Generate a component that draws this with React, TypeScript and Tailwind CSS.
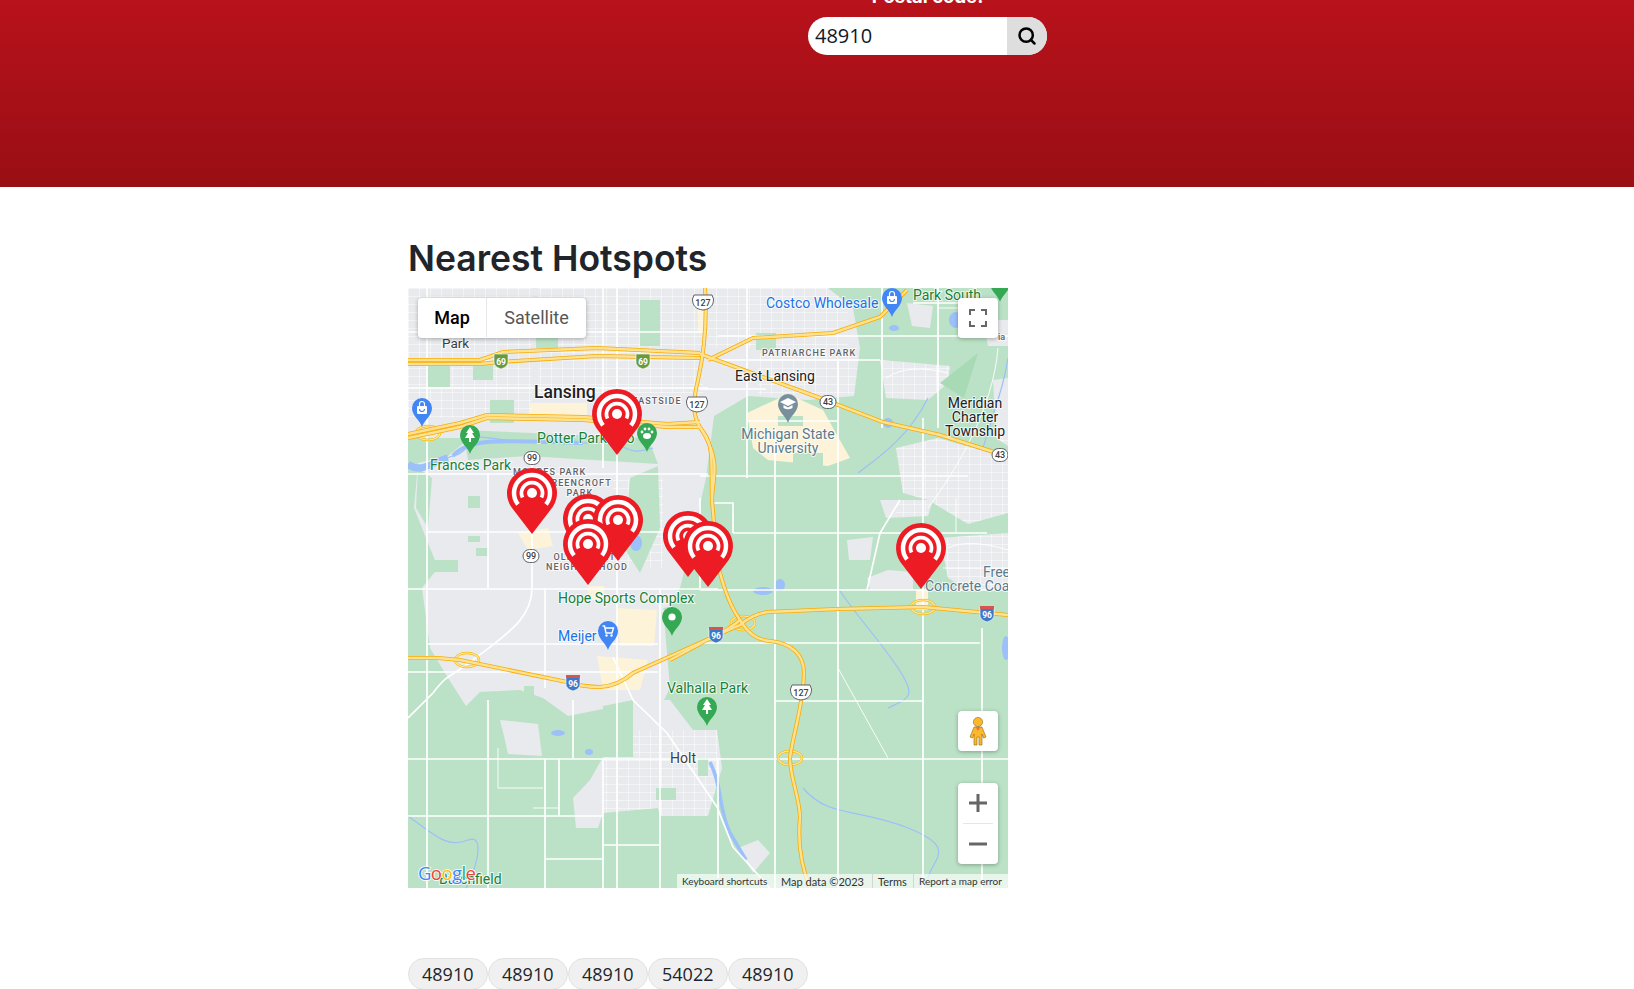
import { Search } from 'lucide-react';

const GRAY = '#e8eaed';
const GREEN = '#bbe2c6';
const PARK = '#a8dab5';
const BEIGE = '#fcf3d9';
const WATER = '#9cc0f9';

const grayAreas = [
  'M0 0H420L445 20L452 60L446 108L400 112L340 108L306 128L298 190L288 235L272 300L256 330L262 400L246 432L200 420L160 428L135 410L112 402L72 404L58 418L40 390L22 360L14 300L30 280L18 250L6 220L10 175L40 168L62 150L0 150Z',
  'M92 432L130 436L134 468L100 466L96 448Z',
  'M225 412L262 412L285 442H309L314 480L300 528H252L250 520L195 525L190 540L168 540L165 510L182 492L195 469H225Z',
  'M439 252L465 249L462 272L441 272Z',
  'M459 290L480 282L505 284L505 302H462Z',
  'M532 250L600 245V302H560L540 290Z',
  'M472 212L525 212L520 228L478 230Z',
  'M488 160L530 150L600 170V225L560 236L520 212L495 205Z',
  'M472 72L509 75L542 78L540 95L520 112L478 110Z',
  'M499 15L525 18L522 40L504 38Z',
  'M575 32H600V58H580Z',
  'M585 92L600 90V158L588 150Z',
  'M330 560L350 552L362 565L345 585Z',
];

const parks = [
  'M20 75H42V99H20Z', 'M65 75H85V92H65Z', 'M232 12H252V58H232Z', 'M128 48L150 46V60H128Z',
  'M348 45H368V62H348Z', 'M82 112H106V135H82Z', 'M55 142L240 150L250 176L120 168L60 172Z',
  'M222 190L250 178L252 240L232 285L216 260Z', 'M385 165H415V185H385Z', 'M370 128H395V138H370Z', 'M60 248H72V254H60Z',
  'M25 272H50V284H25Z', 'M60 208H72V220H60Z', 'M68 260H80V268H68Z', 'M255 320L280 315L290 345L272 360Z',
  'M10 180L24 190L20 240L8 220Z', 'M248 500H268V512H248Z', 'M290 470H300V488H290Z', 'M532 95L570 65L556 110Z',
  'M195 418L225 412V468H195Z', 'M280 412L309 412L312 440H290Z', 'M116 398H126V408H116Z',
];

const beige = [
  'M339 125L380 106L415 122L442 170L420 178L360 172L345 160Z',
  'M122 115H179V128H122Z',
  'M209 320L249 322L246 358H212Z',
  'M189 368L240 372L232 402L195 402Z',
  'M110 245L140 240L145 258L120 262Z',
  'M290 20H298V45H290Z',
  'M180 298H196V312H180Z',
  'M508 302H520V322H508Z',
];

const whiteRoads = [
  'M0 186H300', 'M20 244H310', 'M0 301H310', 'M20 356H250', 'M0 384H250', 'M0 471H600', 'M0 528H195', 'M138 571H195', 'M195 557H252',
  'M325 245H579', 'M292 302H600', 'M292 355H572', 'M367 413H515', 'M0 100H300', 'M0 44H300', 'M300 72H472', 'M310 48H600', 'M505 15H570', 'M292 101H358', 'M340 133H430', 'M292 188H560',
  'M19 0V600', 'M80 186V300', 'M124 172V300C124 330 100 345 69 369S40 385 25 405L0 430', 'M209 0V600', 'M137 300V400', 'M137 471V600', 'M252 300V600', 'M165 412V470',
  'M151 471V528', 'M80 412V600', 'M195 471V600', 'M367 140V600', 'M339 0V190', 'M430 72V600', 'M515 130V600', 'M574 340V600', 'M310 470V590',
  'M474 0V140', 'M530 0V140', 'M305 215H325V245', 'M195 0V180', 'M292 210V300',
  'M492 212L472 245L459 302', 'M205 369L225 412L259 445L309 519L325 559L362 600',
];

const thinRoads = [
  'M590 60C585 120 550 180 520 220', 'M90 460V500H135', 'M125 520H150',
  'M430 380L480 470', 'M548 245V210', 'M530 20H590', 'M478 90Q500 75 540 85', 'M540 260Q560 250 600 262M535 280H600',
];

const water = [
  'M0 180C16 190 28 172 45 168S60 150 69 149 120 158 175 155 210 170 245 160',
  'M395 500C420 530 450 520 500 540S525 570 520 590',
  'M0 528C30 550 40 560 60 552S65 590 58 600',
  'M520 110C500 150 470 170 450 185',
  'M430 300C450 330 470 350 490 380S500 410 480 420',
  'M575 160C590 110 595 100 600 70',
];

const lakes = [
  { cx: 150, cy: 445, rx: 7, ry: 3 }, { cx: 181, cy: 464, rx: 4, ry: 3 }, { cx: 355, cy: 303, rx: 10, ry: 4 }, { cx: 372, cy: 297, rx: 5, ry: 6 },
  { cx: 486, cy: 40, rx: 5, ry: 3 }, { cx: 548, cy: 32, rx: 7, ry: 8 }, { cx: 598, cy: 360, rx: 4, ry: 12 },
  { cx: 228, cy: 255, rx: 6, ry: 8 }, { cx: 480, cy: 135, rx: 5, ry: 5 },
];

const highways = [
  'M0 370H30L52 372L159 394Q175 399 192 399Q210 398 225 385L305 349L332 337Q345 326 360 324L430 321L515 319L579 325L600 327',
  'M297 0C299 30 296 65 290 92C285 112 283 130 296 145C306 158 303 180 304 212L309 272C315 300 322 318 332 332C340 345 348 352 362 353C385 355 396 368 396 385C395 420 385 445 382 470C382 490 392 510 392 530C390 550 392 575 402 600',
  'M0 72H72L95 64L189 60L292 65',
  'M0 76H72L90 74L189 68L292 70',
  'M300 72L345 50L425 45L472 29L499 2',
  'M292 66L412 110L475 134L532 147L589 165L600 168',
  'M0 150L52 139L79 130L175 132L259 139L292 139',
  'M0 146L52 135L79 127L175 129L259 136L292 134',
  'M292 139C315 175 304 190 304 212',
  'M332 332C318 345 300 350 292 356L262 372',
];

const ramps = [[20, 145], [515, 319], [59, 372], [382, 470], [335, 335]];

const pins = [
  [209, 167], [124, 246], [180, 272], [210, 273], [180, 297], [280, 289], [300, 299], [513, 301],
];

const labels: { t: string; x: number; y: number; fill: string; size?: number; w?: number; anchor?: 'middle'; track?: number }[] = [
  { t: 'Park', x: 34, y: 60, fill: '#3c4043' },
  { t: 'Lansing', x: 126, y: 110, fill: '#202124', size: 17.5, w: 500 },
  { t: 'EASTSIDE', x: 224, y: 116, fill: '#5f6368', size: 9, w: 500, track: 1.1 },
  { t: 'Potter Park Zoo', x: 129, y: 155, fill: '#188038', size: 14 },
  { t: 'Frances Park', x: 22, y: 182, fill: '#188038', size: 14 },
  { t: 'MOORES PARK', x: 105, y: 187, fill: '#5f6368', size: 9, w: 500, track: 1.1 },
  { t: 'GREENCROFT', x: 170, y: 198, fill: '#5f6368', size: 9, w: 500, anchor: 'middle', track: 1.1 },
  { t: 'PARK', x: 172, y: 208, fill: '#5f6368', size: 9, w: 500, anchor: 'middle', track: 1.1 },
  { t: 'OLD EVERETT', x: 180, y: 272, fill: '#5f6368', size: 9, w: 500, anchor: 'middle', track: 1.1 },
  { t: 'NEIGHBORHOOD', x: 179, y: 282, fill: '#5f6368', size: 9, w: 500, anchor: 'middle', track: 1.1 },
  { t: 'Hope Sports Complex', x: 150, y: 315, fill: '#188038', size: 14 },
  { t: 'Meijer', x: 150, y: 353, fill: '#1a73e8', size: 14 },
  { t: 'Valhalla Park', x: 259, y: 405, fill: '#188038', size: 14 },
  { t: 'Holt', x: 262, y: 475, fill: '#3c4043', size: 14 },
  { t: 'Costco Wholesale', x: 358, y: 20, fill: '#1a73e8', size: 14 },
  { t: 'Park South', x: 505, y: 12, fill: '#188038', size: 14 },
  { t: 'PATRIARCHE PARK', x: 354, y: 68, fill: '#5f6368', size: 9, w: 500, track: 1.1 },
  { t: 'East Lansing', x: 327, y: 93, fill: '#202124', size: 14 },
  { t: 'Michigan State', x: 380, y: 151, fill: '#5b7b8b', size: 14, anchor: 'middle' },
  { t: 'University', x: 380, y: 165, fill: '#5b7b8b', size: 14, anchor: 'middle' },
  { t: 'Meridian', x: 567, y: 120, fill: '#202124', size: 14, anchor: 'middle' },
  { t: 'Charter', x: 567, y: 134, fill: '#202124', size: 14, anchor: 'middle' },
  { t: 'Township', x: 567, y: 148, fill: '#202124', size: 14, anchor: 'middle' },
  { t: 'Free', x: 575, y: 289, fill: '#5b7b8b', size: 14 },
  { t: 'Concrete Coating', x: 517, y: 303, fill: '#5b7b8b', size: 14 },
  { t: 'Burchfield', x: 31, y: 596, fill: '#188038', size: 14 },
  { t: 'ia', x: 590, y: 52, fill: '#5f6368', size: 9, w: 500 },
];

function MapLabel({ t, x, y, fill, size = 13.5, w = 400, anchor, track }: (typeof labels)[number]) {
  return (
    <text
      x={x}
      y={y}
      fill={fill}
      fontSize={size}
      fontWeight={w}
      textAnchor={anchor}
      letterSpacing={track}
      stroke="#ffffff"
      strokeWidth={2}
      strokeOpacity={0.75}
      className="[paint-order:stroke]"
    >
      {t}
    </text>
  );
}

function Hotspot({ x, y }: { x: number; y: number }) {
  return (
    <g transform={`translate(${x} ${y})`}>
      <path d="M0 0L-20.7 -27A25 25 0 1 1 20.7 -27Z" fill="#ed1c24" />
      <path d="M-14 -29.7A18 18 0 1 1 14 -29.7" fill="none" stroke="#fff" strokeWidth={4.5} />
      <path d="M-9.5 -36.5A10.5 10.5 0 1 1 9.5 -36.5" fill="none" stroke="#fff" strokeWidth={3.8} />
      <circle cx={0} cy={-41} r={5} fill="#fff" />
    </g>
  );
}

function Poi({ x, y, fill, children }: { x: number; y: number; fill: string; children?: React.ReactNode }) {
  return (
    <g transform={`translate(${x} ${y})`}>
      <path d="M0 0C-2 -7 -10 -11 -10 -19A10 10 0 1 1 10 -19C10 -11 2 -7 0 0Z" fill={fill} />
      {children}
    </g>
  );
}

const tree = <path d="M0 -27L-4 -21H-2L-5 -16H-1V-12H1V-16H5L2 -21H4Z" fill="#fff" />;
const bag = (
  <g fill="none" stroke="#fff" strokeWidth={1.2}>
    <rect x={-5} y={-21} width={10} height={8} rx={1} fill="#fff" stroke="none" />
    <path d="M-2.5 -21V-23A2.5 2.5 0 0 1 2.5 -23V-21" />
    <path d="M-2.5 -18A2.5 2.5 0 0 0 2.5 -18" stroke="#4285f4" />
  </g>
);

function UsShield({ x, y, n }: { x: number; y: number; n: string }) {
  return (
    <g transform={`translate(${x} ${y})`}>
      <path d="M-9 -7H9L10.5 -3C10.5 3 8 7 0 8C-8 7 -10.5 3 -10.5 -3Z" fill="#fff" stroke="#5f6368" />
      <text y={3.5} textAnchor="middle" fontSize={9} fontWeight={500} fill="#3c4043">{n}</text>
    </g>
  );
}

function RoundShield({ x, y, n, w = 10 }: { x: number; y: number; n: string; w?: number }) {
  return (
    <g transform={`translate(${x} ${y})`}>
      <rect x={-w} y={-6.5} width={w * 2} height={13} rx={6.5} fill="#fff" stroke="#5f6368" />
      <text y={3.2} textAnchor="middle" fontSize={9} fontWeight={500} fill="#3c4043">{n}</text>
    </g>
  );
}

function IShield({ x, y, n, fill = '#3d78c9' }: { x: number; y: number; n: string; fill?: string }) {
  return (
    <g transform={`translate(${x} ${y})`}>
      <path d="M-7 -7H7V1C7 5 3 7 0 8C-3 7 -7 5 -7 1Z" fill={fill} stroke="#fff" strokeWidth={0.6} />
      {fill === '#3d78c9' && <rect x={-7} y={-8} width={14} height={3} fill="#d9534f" />}
      <text y={3.5} textAnchor="middle" fontSize={8.5} fontWeight={700} fill="#fff">{n}</text>
    </g>
  );
}

function StreetMap() {
  return (
    <svg viewBox="0 0 600 600" className="block w-full h-full font-['Roboto',sans-serif]">
      <defs>
        <pattern id="streets" width="11" height="8" patternUnits="userSpaceOnUse">
          <path d="M0 .5H11M.5 0V8" stroke="#fff" strokeWidth={0.7} strokeOpacity={0.7} fill="none" />
        </pattern>
        <clipPath id="urban">
          {grayAreas.map((d) => <path key={d} d={d} />)}
        </clipPath>
      </defs>
      <rect width={600} height={600} fill={GREEN} />
      {grayAreas.map((d) => <path key={d} d={d} fill={GRAY} />)}
      {beige.map((d) => <path key={d} d={d} fill={BEIGE} />)}

      <g clipPath="url(#urban)">
        <rect x={0} y={0} width={124} height={130} fill="url(#streets)" />
        <rect x={130} y={0} width={165} height={105} fill="url(#streets)" />
        <rect x={300} y={0} width={140} height={60} fill="url(#streets)" />
        <rect x={350} y={65} width={100} height={42} fill="url(#streets)" />
        <rect x={205} y={190} width={50} height={90} fill="url(#streets)" />
        <rect x={195} y={442} width={115} height={90} fill="url(#streets)" />
        <rect x={488} y={150} width={112} height={85} fill="url(#streets)" />
        <rect x={535} y={245} width={65} height={60} fill="url(#streets)" />
        <rect x={472} y={72} width={70} height={40} fill="url(#streets)" />
      </g>
      {parks.map((d) => <path key={d} d={d} fill={d.startsWith('M532') ? PARK : GREEN} />)}

      <g fill="none" stroke={WATER} strokeWidth={1.2}>
        {water.map((d) => <path key={d} d={d} />)}
      </g>
      <path d="M45 168C60 150 90 152 175 155" fill="none" stroke={WATER} strokeWidth={4} />
      <path d="M0 176C14 186 24 174 40 170" fill="none" stroke={WATER} strokeWidth={7} />
      <path d="M302 474C315 500 310 520 322 545L338 572" fill="none" stroke={WATER} strokeWidth={3.5} />
      {lakes.map((l) => <ellipse key={`${l.cx}-${l.cy}`} {...l} fill={WATER} />)}

      <g fill="none" stroke="#fff" strokeWidth={1.7}>
        {whiteRoads.map((d) => <path key={d} d={d} />)}
      </g>
      <g fill="none" stroke="#fff" strokeWidth={0.9}>
        {thinRoads.map((d) => <path key={d} d={d} />)}
      </g>

      <g fill="none">
        {ramps.map(([x, y]) => <ellipse key={x} cx={x} cy={y} rx={12} ry={7} stroke="#fbbc04" strokeWidth={2.4} />)}
        {ramps.map(([x, y]) => <ellipse key={x} cx={x} cy={y} rx={12} ry={7} stroke="#fde8a8" strokeWidth={1.1} />)}
        {highways.map((d) => <path key={d} d={d} stroke="#f9ab00" strokeWidth={4} />)}
        {highways.map((d) => <path key={d} d={d} stroke="#fde293" strokeWidth={2.4} />)}
      </g>

      {labels.map((l) => <MapLabel key={l.t} {...l} />)}

      <IShield x={93} y={73} n="69" fill="#6a9a3e" />
      <IShield x={235} y={73} n="69" fill="#6a9a3e" />
      <UsShield x={295} y={14} n="127" />
      <UsShield x={289} y={116} n="127" />
      <UsShield x={393} y={404} n="127" />
      <RoundShield x={420} y={114} n="43" w={8} />
      <RoundShield x={592} y={167} n="43" w={8} />
      <RoundShield x={124} y={170} n="99" w={8} />
      <RoundShield x={123} y={268} n="99" w={8} />
      <IShield x={308} y={347} n="96" />
      <IShield x={165} y={395} n="96" />
      <IShield x={579} y={326} n="96" />

      <Poi x={14} y={139} fill="#4285f4">{bag}</Poi>
      <Poi x={484} y={29} fill="#4285f4">{bag}</Poi>
      <Poi x={592} y={14} fill="#34a853" />
      <Poi x={62} y={166} fill="#34a853">{tree}</Poi>
      <Poi x={299} y={438} fill="#34a853">{tree}</Poi>
      <Poi x={239} y={164} fill="#34a853">
        <g fill="#fff">
          <ellipse cx={0} cy={-16} rx={4} ry={3} />
          <circle cx={-5} cy={-20} r={1.4} />
          <circle cx={-2} cy={-23} r={1.4} />
          <circle cx={2} cy={-23} r={1.4} />
          <circle cx={5} cy={-20} r={1.4} />
        </g>
      </Poi>
      <Poi x={380} y={135} fill="#78909c">
        <path d="M0 -25L8 -21L0 -17L-8 -21Z" fill="#fff" />
        <path d="M-4.5 -18V-15Q0 -12.5 4.5 -15V-18L0 -15.5Z" fill="#fff" />
      </Poi>
      <Poi x={200} y={362} fill="#4285f4">
        <path d="M-5.5 -24H-3.5L-2 -17H4L5.5 -22H-3" fill="none" stroke="#fff" strokeWidth={1.4} />
        <circle cx={-1.5} cy={-14.5} r={1.2} fill="#fff" />
        <circle cx={3.5} cy={-14.5} r={1.2} fill="#fff" />
      </Poi>
      <Poi x={264} y={348} fill="#34a853">
        <circle cx={0} cy={-19} r={3.6} fill="#fff" />
      </Poi>

      {pins.map(([x, y]) => <Hotspot key={`${x}-${y}`} x={x} y={y} />)}

      <text x={10} y={592} fontSize={18.5} fontWeight={500} stroke="#fff" strokeWidth={1.6} className="[paint-order:stroke] font-['Open_Sans',sans-serif]" letterSpacing={-0.6}>
        <tspan fill="#4285f4">G</tspan>
        <tspan fill="#ea4335">o</tspan>
        <tspan fill="#fbbc04">o</tspan>
        <tspan fill="#4285f4">g</tspan>
        <tspan fill="#34a853">l</tspan>
        <tspan fill="#ea4335">e</tspan>
      </text>
    </svg>
  );
}

function MapOverlay() {
  return (
    <>
      <div className="absolute left-[10px] top-[10px] flex h-10 rounded-sm bg-white pb-px text-[18px] font-['Roboto',sans-serif] shadow-[0_1px_4px_rgba(0,0,0,0.3)]">
        <div className="flex w-[69px] items-center justify-center font-medium text-black border-r border-gray-200">Map</div>
        <div className="flex w-[99px] items-center justify-center text-[#565656]">Satellite</div>
      </div>

      <div className="absolute right-[10px] top-[10px] flex h-10 w-10 items-center justify-center rounded-sm bg-white shadow-[0_1px_4px_rgba(0,0,0,0.3)]">
        <svg viewBox="0 0 18 18" className="h-[18px] w-[18px]" fill="none" stroke="#666666" strokeWidth={2}>
          <path d="M1 6V1H6M12 1H17V6M17 12V17H12M6 17H1V12" />
        </svg>
      </div>

      <div className="absolute right-[10px] top-[423px] flex h-10 w-10 items-center justify-center rounded-sm bg-white shadow-[0_1px_4px_rgba(0,0,0,0.3)]">
        <svg viewBox="0 0 18 30" className="h-[30px] w-[18px]">
          <circle cx={9} cy={6} r={4.6} fill="#fbb829" stroke="#8a6a1e" strokeWidth={0.6} />
          <path d="M5 11H13L17 21L14.5 22L13 18V29H10V21H8V29H5V18L3.5 22L1 21Z" fill="#fbb829" stroke="#8a6a1e" strokeWidth={0.6} />
          <path d="M6.5 11L9 15L11.5 11Z" fill="#e8743b" />
        </svg>
      </div>

      <div className="absolute right-[10px] top-[495px] flex w-10 flex-col items-center rounded-sm bg-white shadow-[0_1px_4px_rgba(0,0,0,0.3)]">
        <div className="flex h-10 w-full items-center justify-center">
          <svg viewBox="0 0 18 18" className="h-[18px] w-[18px]" fill="#666666">
            <path d="M7.5 0H10.5V7.5H18V10.5H10.5V18H7.5V10.5H0V7.5H7.5Z" />
          </svg>
        </div>
        <div className="h-px w-[30px] bg-[#e6e6e6]" />
        <div className="flex h-10 w-full items-center justify-center">
          <svg viewBox="0 0 18 18" className="h-[18px] w-[18px]" fill="#666666">
            <path d="M0 7.5H18V10.5H0Z" />
          </svg>
        </div>
      </div>

      <div className="absolute bottom-0 right-0 flex h-[14px] w-[331px] items-center bg-white/65 pl-[5px] text-[10px] leading-none text-[#333] font-['Lato',sans-serif] whitespace-nowrap">
        <span className="w-[99px]">Keyboard shortcuts</span>
        <span className="w-[91px] text-[11px]">Map data ©2023</span>
        <span className="flex h-full w-[41px] items-center border-l border-[#d5d5d5] pl-[5px] text-[11px]">Terms</span>
        <span className="flex h-full items-center border-l border-[#d5d5d5] pl-[5px]">Report a map error</span>
      </div>
    </>
  );
}

export default function App() {
  return (
    <div className="h-[989px] overflow-hidden bg-white font-['Inter',sans-serif]">
      <header className="flex h-[187px] flex-col items-center overflow-hidden bg-gradient-to-b from-[#b8121b] to-[#990e14] pl-[221px]">
        <label className="-mt-[15px] mb-[10px] h-[22px] text-[18.5px] font-bold leading-[22px] text-white">Postal code:</label>
        <div className="flex h-[38px] w-[239px] overflow-hidden rounded-full bg-white">
          <input
            readOnly
            value="48910"
            className="w-[199px] pl-[7px] text-[20px] text-[#111827] font-['Open_Sans',sans-serif] outline-none"
          />
          <button className="flex w-10 items-center justify-center bg-[#dedede] text-black">
            <Search size={20} strokeWidth={3} />
          </button>
        </div>
      </header>

      <main className="pl-[408px]">
        <h2 className="mt-[44px] mb-[1px] h-[56px] text-[35.5px] font-semibold leading-[56px] text-[#212529]">Nearest Hotspots</h2>
        <div className="relative h-[600px] w-[600px] overflow-hidden">
          <StreetMap />
          <MapOverlay />
        </div>
        <div className="mt-[70px] flex gap-[0.5px]">
          {['48910', '48910', '48910', '54022', '48910'].map((zip, i) => (
            <span
              key={i}
              className="flex h-[32px] w-[79.5px] items-center justify-center rounded-full border border-[#e2e2e2] bg-[#f0f0f0] text-[18px] text-[#212529] font-['Open_Sans',sans-serif]"
            >
              {zip}
            </span>
          ))}
        </div>
      </main>
    </div>
  );
}
